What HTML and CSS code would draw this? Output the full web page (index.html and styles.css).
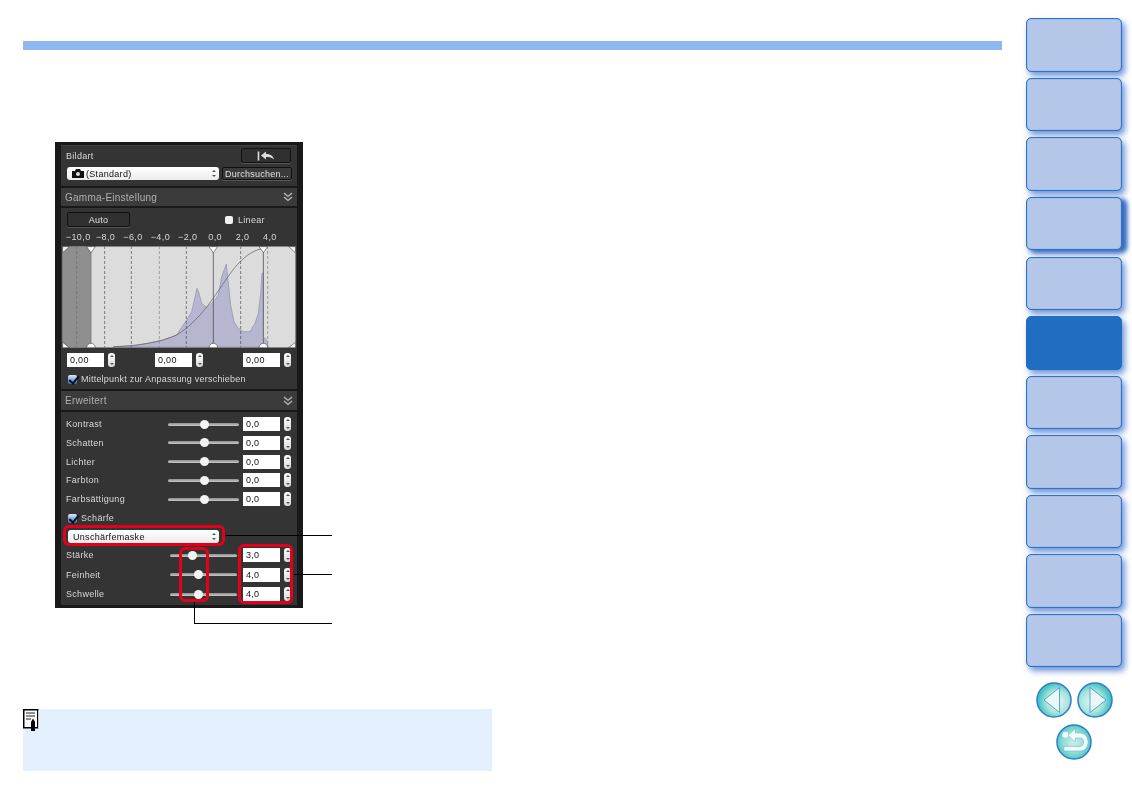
FILE: index.html
```html
<!DOCTYPE html>
<html lang="de">
<head>
<meta charset="utf-8">
<title>Unschärfemaske</title>
<link rel="stylesheet" href="styles.css">
</head>
<body>
<div class="page">
  <main class="main">
    <div class="topbar"></div>
    <div class="figure">
      <div class="panel">
        <section class="sec sec-top">
          <div class="row-a">
            <span class="lbl">Bildart</span>
            <button class="btn btn-reset"><svg width="20" height="10" viewBox="0 0 20 10"><path d="M2.500 0.500V9.500" stroke="#ddd" stroke-width="1.600"/><path d="M5 4.500L10 0.500V3C14 3 17 4.500 18 8.500C16 6.500 13.500 6 10 6V8.500Z" fill="#ddd"/></svg></button>
          </div>
          <div class="row-b">
            <div class="select sel-style"><svg class="cam" width="12" height="9" viewBox="0 0 12 9"><path d="M0 2H3L4 0H8L9 2H12V9H0Z" fill="#111"/><circle cx="6" cy="5" r="2" fill="#ddd"/></svg><span>(Standard)</span><i class="updown"></i></div>
            <button class="btn btn-browse">Durchsuchen...</button>
          </div>
        </section>
        <header class="sec-head"><span>Gamma-Einstellung</span><svg class="chev" width="10" height="10" viewBox="0 0 10 10"><path d="M1 1L5 4.500L9 1M1 5L5 8.500L9 5" fill="none" stroke="#bbb" stroke-width="1.300"/></svg></header>
        <section class="sec sec-gamma">
          <div class="row-c">
            <button class="btn btn-auto">Auto</button>
            <label class="linear"><i class="box"></i>Linear</label>
          </div>
          <div class="scale"><span>−10,0</span><span>−8,0</span><span>−6,0</span><span>−4,0</span><span>−2,0</span><span>0,0</span><span>2,0</span><span>4,0</span></div>
          <svg class="hist" width="234" height="102" viewBox="36 18 702 306">
            <rect x="36" y="18" width="702" height="306" fill="#dcdcdc"/>
            <rect x="36" y="18" width="87" height="306" fill="#8f8f8f"/>
            <path d="M190 321L255 317L300 308L340 300L380 285L395 262L410 240L425 215L433 180L441 145L447 160L455 190L470 203L490 185L505 165L515 110L529 72L535 130L542 195L552 245L565 265L580 275L600 275L615 250L625 220L632 160L636 100L640 100L640 290L650 300L655 321Z" fill="#b6b6d0" stroke="#8e8ea8" stroke-width="2"/>
            <g stroke="#4a4a4a" stroke-width="2" stroke-dasharray="9 6" fill="none">
              <path d="M80 18V324" stroke="#6d6d6d"/><path d="M164 18V324"/><path d="M244 18V324"/><path d="M328 18V324" stroke="#808080"/><path d="M409 18V324"/><path d="M572 18V324"/><path d="M653 18V324" stroke="#808080"/>
            </g>
            <path d="M123 18V324" stroke="#666" stroke-width="2" fill="none"/>
            <path d="M490 18V324" stroke="#3a3a3a" stroke-width="2" fill="none"/>
            <path d="M640 18V324" stroke="#6a6a6a" stroke-width="3" fill="none"/>
            <path d="M190 320C260 318 330 308 380 285C430 255 470 205 510 145C550 85 585 35 640 25" fill="none" stroke="#5a5a5a" stroke-width="2"/>
            <rect x="37" y="19" width="700" height="304" fill="none" stroke="#777" stroke-width="3"/>
            <g fill="#fff" stroke="#222" stroke-width="1.500">
              <path d="M110 20H136L123 38Z"/><path d="M477 20H503L490 38Z"/><path d="M627 20H653L640 38Z"/>
              <path d="M38 20H58L38 38Z"/><path d="M736 20H716L736 38Z"/>
              <path d="M110 323A13 13 0 0 1 136 323Z"/><path d="M477 323A13 13 0 0 1 503 323Z"/><path d="M627 323A13 13 0 0 1 653 323Z"/>
              <path d="M38 323V307L58 323Z"/><path d="M736 323V307L716 323Z"/>
            </g>
          </svg>
          <div class="row-d">
            <div class="pair"><span class="input">0,00</span><i class="spin"></i></div>
            <div class="pair"><span class="input">0,00</span><i class="spin"></i></div>
            <div class="pair"><span class="input">0,00</span><i class="spin"></i></div>
          </div>
          <label class="check check-mid"><i class="tick"></i>Mittelpunkt zur Anpassung verschieben</label>
        </section>
        <header class="sec-head sec-head-b"><span>Erweitert</span><svg class="chev" width="10" height="10" viewBox="0 0 10 10"><path d="M1 1L5 4.500L9 1M1 5L5 8.500L9 5" fill="none" stroke="#bbb" stroke-width="1.300"/></svg></header>
        <section class="sec sec-adv">
          <div class="adj"><span class="lbl">Kontrast</span><div class="slider"><i class="knob" style="left:51%"></i></div><span class="input">0,0</span><i class="spin"></i></div>
          <div class="adj"><span class="lbl">Schatten</span><div class="slider"><i class="knob" style="left:51%"></i></div><span class="input">0,0</span><i class="spin"></i></div>
          <div class="adj"><span class="lbl">Lichter</span><div class="slider"><i class="knob" style="left:51%"></i></div><span class="input">0,0</span><i class="spin"></i></div>
          <div class="adj"><span class="lbl">Farbton</span><div class="slider"><i class="knob" style="left:51%"></i></div><span class="input">0,0</span><i class="spin"></i></div>
          <div class="adj"><span class="lbl">Farbsättigung</span><div class="slider"><i class="knob" style="left:51%"></i></div><span class="input">0,0</span><i class="spin"></i></div>
          <label class="check check-sharp"><i class="tick"></i>Schärfe</label>
          <div class="select sel-mask"><span>Unschärfemaske</span><i class="updown"></i></div>
          <div class="sharp-rows">
            <div class="adj adj-s"><span class="lbl">Stärke</span><div class="slider"><i class="knob" style="left:34%"></i></div><span class="input">3,0</span><i class="spin"></i></div>
            <div class="adj adj-s"><span class="lbl">Feinheit</span><div class="slider"><i class="knob" style="left:43%"></i></div><span class="input">4,0</span><i class="spin"></i></div>
            <div class="adj adj-s"><span class="lbl">Schwelle</span><div class="slider"><i class="knob" style="left:43%"></i></div><span class="input">4,0</span><i class="spin"></i></div>
          </div>
        </section>
      </div>
      <i class="mark mark-select"></i>
      <i class="mark mark-sliders"></i>
      <i class="mark mark-inputs"></i>
      <i class="lead lead-1"></i>
      <i class="lead lead-2"></i>
      <i class="lead lead-3"></i>
    </div>
    <aside class="note">
      <svg class="note-icon" width="16" height="23" viewBox="0 0 16 23">
        <rect x="0.750" y="0.750" width="14" height="18" fill="#fff" stroke="#000" stroke-width="1.500"/>
        <path d="M15.500 1V19" stroke="#ccc"/>
        <path d="M3 4H12M3 7H12M3 10H8" stroke="#222" stroke-width="1"/>
        <path d="M8 13L10 9.500L12 13V22H8Z" fill="#000"/>
      </svg>
    </aside>
  </main>
  <nav class="side">
    <a class="tab"></a>
    <a class="tab"></a>
    <a class="tab"></a>
    <a class="tab tab-open"></a>
    <a class="tab"></a>
    <a class="tab tab-on"></a>
    <a class="tab"></a>
    <a class="tab"></a>
    <a class="tab"></a>
    <a class="tab"></a>
    <a class="tab"></a>
    <div class="arrows">
      <svg class="round" width="36" height="36" viewBox="0 0 36 36"><defs><radialGradient id="g1" cx="0.600" cy="0.550" r="0.550"><stop offset="0" stop-color="#e4f7f3"/><stop offset="0.600" stop-color="#a9e4dc"/><stop offset="1" stop-color="#45c2c2"/></radialGradient></defs><circle cx="18" cy="18" r="17" class="disc" fill="url(#g1)"/><path d="M8 18L23.500 5.500V30.500Z" fill="#e9f8f6" stroke="#3a8fc8" stroke-width="0.800"/></svg>
      <svg class="round" width="36" height="36" viewBox="0 0 36 36"><defs><radialGradient id="g2" cx="0.400" cy="0.550" r="0.550"><stop offset="0" stop-color="#e4f7f3"/><stop offset="0.600" stop-color="#a9e4dc"/><stop offset="1" stop-color="#45c2c2"/></radialGradient></defs><circle cx="18" cy="18" r="17" class="disc" fill="url(#g2)"/><path d="M29 18L13 5.500V30.500Z" fill="#e9f8f6" stroke="#3a8fc8" stroke-width="0.800"/></svg>
    </div>
    <svg class="round back" width="36" height="36" viewBox="0 0 36 36"><defs><radialGradient id="g3" cx="0.500" cy="0.500" r="0.550"><stop offset="0" stop-color="#cfeeea"/><stop offset="0.600" stop-color="#8fdcd4"/><stop offset="1" stop-color="#45c2c2"/></radialGradient></defs><circle cx="18" cy="18" r="17" class="disc" fill="url(#g3)"/><circle cx="9.300" cy="10.700" r="3" fill="#f4fcfb"/><path d="M12 11.300L19.300 4.700V9H24C29 9 32 13 32 18C32 23 29 27 24 27H8V22.500H24C26.500 22.500 27.500 20.500 27.500 18C27.500 15.500 26.500 14 24 14H19.300V18Z" fill="#f4fcfb" stroke="#5fb2cc" stroke-width="0.500"/></svg>
  </nav>
</div>
</body>
</html>
```
FILE: styles.css
```css
* { box-sizing: border-box; }
html, body { margin: 0; padding: 0; background: #fff; }
body { width: 1132px; height: 800px; overflow: hidden; font-family: "Liberation Sans", Arial, sans-serif; }
i { display: block; }

.page { display: flex; align-items: flex-start; }
.main { width: 1026px; padding: 41px 0 0 23px; flex: none; }
.topbar { width: 979px; height: 9px; background: #8fb8f2; }

.figure { position: relative; width: 248px; margin: 92px 0 0 32px; }
.panel { width: 248px; height: 466px; background: #191919; padding: 3px 6px 3px; font-size: 9px; letter-spacing: 0.300px; color: #dcdcdc; display: flex; flex-direction: column; filter: blur(0.300px); }
.panel > * { flex: none; }
.sec { background: #343434; }
.sec-top { height: 41px; padding: 2px 6px 0 6px; border-top: 1px solid #3f3f3f; }
.sec-head { height: 18px; margin-top: 2px; background: #3b3b3b; color: #b0b0b0; font-size: 10px; letter-spacing: 0.250px; display: flex; align-items: center; justify-content: space-between; padding: 0 4px 0 4px; }
.sec-head-b { height: 19px; }
.sec-gamma { height: 181px; margin-top: 2px; padding-top: 4px; }
.sec-adv { height: 193px; margin-top: 2px; padding: 5px 0 0 5px; }
.lbl { color: #d8d8d8; }
.row-a { display: flex; justify-content: space-between; align-items: center; height: 15px; }
.row-b { display: flex; gap: 3px; margin-top: 4px; }
.row-a .lbl { margin-left: -1px; }

.btn { margin: 0; padding: 0; font: inherit; color: #e0e0e0; letter-spacing: 0.250px; background: #303030; border: 1px solid #111; border-radius: 2px; display: flex; align-items: center; justify-content: center; box-shadow: 0 1px 0 #555; }
.btn-reset { width: 50px; height: 15px; }
.btn-browse { width: 70px; height: 13px; margin-right: -1px; background: #3a3a3a; }
.btn-auto { width: 63px; height: 15px; margin-left: 6px; }

.select { position: relative; background: linear-gradient(#fff, #ececec); color: #111; border-radius: 3px; display: flex; align-items: center; height: 13px; }
.sel-style { width: 152px; padding-left: 5px; gap: 2px; }
.sel-mask { width: 151px; margin: 6px 0 0 2px; padding-left: 5px; }
.cam { flex: none; }
.updown { position: absolute; right: 3px; top: 2px; width: 5px; height: 9px; }
.updown::before, .updown::after, .spin::before, .spin::after { content: ""; position: absolute; left: 1px; border-left: 2px solid transparent; border-right: 2px solid transparent; }
.updown::before, .spin::before { top: 1px; border-bottom: 2.500px solid #555; }
.updown::after, .spin::after { bottom: 1px; border-top: 2.500px solid #555; }

.row-c { display: flex; align-items: center; height: 15px; }
.linear { display: flex; align-items: center; gap: 5px; margin-left: 95px; color: #d8d8d8; }
.box { width: 8px; height: 8px; background: #f0f0f0; border-radius: 2px; }
.scale { display: grid; grid-template-columns: repeat(8, 27.400px); margin: 4px 0 0 3.500px; height: 12px; line-height: 12px; text-align: center; color: #d8d8d8; letter-spacing: 0.400px; white-space: nowrap; }
.hist { display: block; margin: 3px 0 0 1px; }
.row-d { display: flex; margin: 5px 0 0 6px; gap: 40px; }
.pair { display: flex; gap: 4px; }
.input { display: block; width: 37px; height: 14px; background: #fff; color: #111; line-height: 14px; padding-left: 3px; flex: none; }
.spin { position: relative; width: 7px; height: 14px; border-radius: 3px; background: linear-gradient(#fff, #d8d8d8); flex: none; }
.spin::before { top: 2px; left: 1.500px; }
.spin::after { bottom: 2px; left: 1.500px; }
.check { display: flex; align-items: center; gap: 4px; color: #d8d8d8; }
.check-mid { margin: 6px 0 0 7px; height: 12px; letter-spacing: 0.220px; }
.check-sharp { margin: 6px 0 0 2px; height: 12px; }
.tick { position: relative; width: 9px; height: 9px; background: linear-gradient(#dfeafa, #2f6fd0); border-radius: 2px; }
.tick::after { content: ""; position: absolute; left: 2.500px; top: -1px; width: 4px; height: 8px; border: solid #111; border-width: 0 2px 2px 0; transform: rotate(40deg); }

.adj { display: grid; grid-template-columns: 102px 71px 41px 11px; align-items: center; height: 14px; margin-bottom: 4.750px; }
.adj .input { margin-left: 4px; width: 37px; }
.adj .spin { margin-left: 4px; width: 7px; }
.slider { position: relative; height: 3px; background: linear-gradient(#8e8e8e, #c9c9c9); border-radius: 2px; }
.adj-s .slider { width: 67px; margin-left: 2px; }
.knob { position: absolute; top: -3px; width: 9px; height: 9px; margin-left: -4.500px; border-radius: 50%; background: #f4f4f4; }
.sharp-rows { margin-top: 5px; }
.adj-s { margin-bottom: 5.500px; }

.mark { position: absolute; border: 3px solid #e2001a; border-radius: 6px; }
.mark-select { left: 8px; top: 383px; width: 162px; height: 21px; }
.mark-sliders { left: 124px; top: 405px; width: 30px; height: 55px; }
.mark-inputs { left: 183px; top: 402px; width: 55px; height: 60px; }
.lead { position: absolute; background: #000; height: 1px; }
.lead-1 { left: 170px; top: 393px; width: 107px; }
.lead-2 { left: 239px; top: 432px; width: 38px; }
.lead-3 { left: 139px; top: 460px; width: 138px; height: 22px; background: none; border-left: 1px solid #000; border-bottom: 1px solid #000; }

.note { width: 469px; height: 62px; margin-top: 101px; background: #e4f0fd; }
.note-icon { display: block; }

.side { width: 106px; flex: none; padding-top: 18.300px; display: flex; flex-direction: column; align-items: flex-start; }
.tab { display: block; width: 96px; height: 53.500px; margin-bottom: 6.070px; background: #b4c7e8; border: 1px solid #2d74c6; border-radius: 5px; box-shadow: 3px 4px 6px rgba(62, 112, 205, 0.750), inset 0 0 1px #2d74c6; }
.tab-open { box-shadow: 5px 2px 4px #3a6cc0, 3px 4px 6px rgba(62, 112, 205, 0.750), inset 0 0 1px #2d74c6; }
.tab-on { background: #1f6ec1; border-color: #1f6ec1; }
.arrows { display: flex; gap: 5px; margin: 9px 0 0 9.500px; }
.round { display: block; }
.back { margin: 6px 0 0 30px; }
.disc { stroke: #2f7fc8; stroke-width: 1.500; }
```
